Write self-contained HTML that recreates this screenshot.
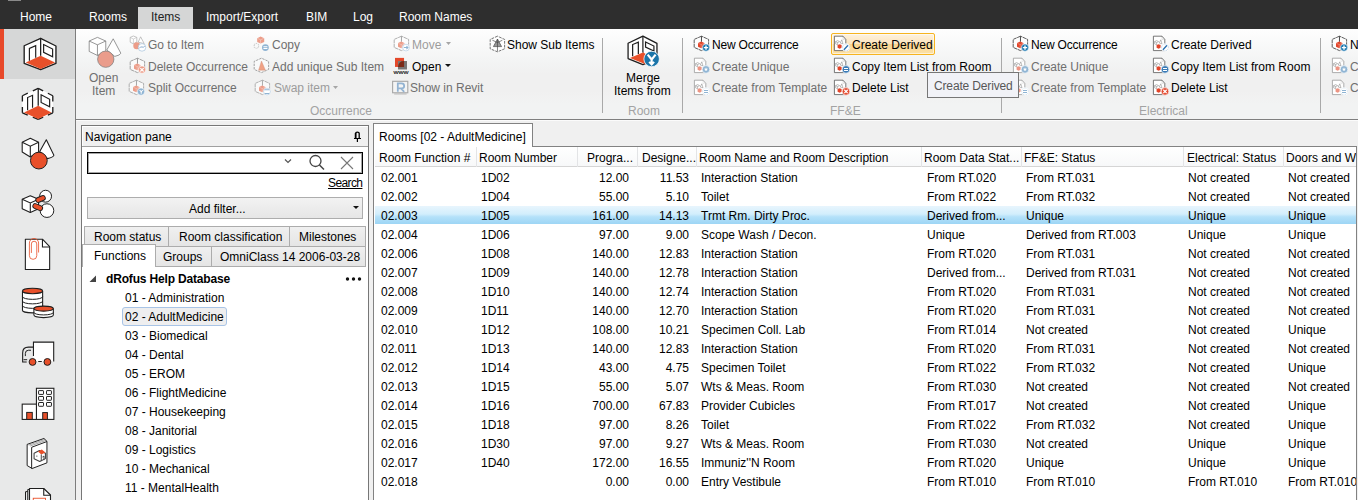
<!DOCTYPE html>
<html><head><meta charset="utf-8"><style>
*{margin:0;padding:0;box-sizing:border-box}
html,body{width:1358px;height:500px;overflow:hidden;background:#f0f0f0}
body{position:relative;font-family:"Liberation Sans",sans-serif;font-size:12px;color:#000}
.a{position:absolute}
.t{position:absolute;white-space:nowrap;line-height:16px;height:16px}
.mt{color:#fff;top:9px}
.dis{color:#6f6f6f}
.dis2{color:#9c9c9c}
.lbl{color:#a3a3a3}
.sep{width:1px;background:#a9a9a9}
.tab{position:absolute;border:1px solid #acacac;background:linear-gradient(#f0f0f0,#e5e5e5)}
</style></head><body>
<div class="a" style="left:0px;top:0px;width:1358px;height:29px;background:#2e2e2e"></div>
<div class="a" style="left:8px;top:0px;width:13px;height:1px;background:#8a8a8a"></div>
<div class="a" style="left:138px;top:7px;width:55px;height:22px;background:#d5d6d6"></div>
<div class="t " style="left:20px;top:9px;color:#fff">Home</div>
<div class="t " style="left:89px;top:9px;color:#fff">Rooms</div>
<div class="t " style="left:206px;top:9px;color:#fff">Import/Export</div>
<div class="t " style="left:306px;top:9px;color:#fff">BIM</div>
<div class="t " style="left:353px;top:9px;color:#fff">Log</div>
<div class="t " style="left:399px;top:9px;color:#fff">Room Names</div>
<div class="t " style="left:151px;top:9px;color:#222">Items</div>
<div class="a" style="left:0px;top:29px;width:75px;height:471px;background:#e8e9e9"></div>
<div class="a" style="left:4px;top:29px;width:71px;height:50px;background:#d6d7d7"></div>
<div class="a" style="left:0px;top:29px;width:4px;height:50px;background:#e8492a"></div>
<div class="a" style="left:75px;top:29px;width:1px;height:471px;background:#7d7d7d"></div>
<div class="a" style="left:76px;top:29px;width:1282px;height:90px;background:linear-gradient(#fefefe 0px,#f3f4f4 32px,#f0f0f0 45px,#f0f0f0 62px,#f2f3f3 75px,#f2f3f3 90px)"></div>
<div class="a" style="left:76px;top:119px;width:1282px;height:1px;background:#7f7f7f"></div>
<div class="a" style="left:76px;top:120px;width:1282px;height:1px;background:#fbfbfb"></div>
<div class="t dis" style="left:89px;top:70px;">Open</div>
<div class="t dis" style="left:92px;top:83px;">Item</div>
<div class="t dis" style="left:148px;top:37px;">Go to Item</div>
<div class="t dis" style="left:148px;top:59px;">Delete Occurrence</div>
<div class="t dis" style="left:148px;top:80px;">Split Occurrence</div>
<div class="t dis" style="left:272px;top:37px;">Copy</div>
<div class="t dis" style="left:272px;top:59px;">Add unique Sub Item</div>
<div class="t dis2" style="left:274px;top:80px;">Swap item</div>
<div class="t dis2" style="left:412px;top:37px;">Move</div>
<div class="t " style="left:412px;top:59px;">Open</div>
<div class="t dis" style="left:410px;top:80px;">Show in Revit</div>
<div class="t " style="left:507px;top:37px;">Show Sub Items</div>
<div class="t lbl" style="left:310px;top:103px;">Occurrence</div>
<svg class="a" style="left:333px;top:86px" width="5" height="3" viewBox="0 0 5 3"><path d="M0,0 L5,0 L2.5,3 Z" fill="#a6a6a6"/></svg>
<svg class="a" style="left:446px;top:42px" width="5" height="3" viewBox="0 0 5 3"><path d="M0,0 L5,0 L2.5,3 Z" fill="#a6a6a6"/></svg>
<svg class="a" style="left:445px;top:64px" width="6" height="3" viewBox="0 0 6 3"><path d="M0,0 L6,0 L3.0,3 Z" fill="#111"/></svg>
<div class="a" style="left:602px;top:38px;width:1px;height:75px;background:#a9a9a9"></div>
<div class="t " style="left:626px;top:70px;">Merge</div>
<div class="t " style="left:614px;top:83px;">Items from</div>
<div class="t lbl" style="left:628px;top:103px;">Room</div>
<div class="a" style="left:682px;top:38px;width:1px;height:75px;background:#a9a9a9"></div>
<div class="t " style="left:712px;top:37px;letter-spacing:-0.2px">New Occurrence</div>
<div class="t dis" style="left:712px;top:59px;">Create Unique</div>
<div class="t dis" style="left:712px;top:80px;">Create from Template</div>
<div class="a" style="left:831px;top:33px;width:104px;height:22px;border:1px solid #f6b420;border-radius:2px;box-shadow:inset 0 0 0 1px rgba(255,255,255,0.55);background:linear-gradient(#fdf2e0 0%,#fce4bd 48%,#f9d590 52%,#fbe1a8 100%)"></div>
<div class="t " style="left:852px;top:37px;">Create Derived</div>
<div class="t " style="left:852px;top:59px;">Copy Item List from Room</div>
<div class="t " style="left:852px;top:80px;">Delete List</div>
<div class="t lbl" style="left:830px;top:103px;">FF&amp;E</div>
<div class="a" style="left:1001px;top:38px;width:1px;height:75px;background:#a9a9a9"></div>
<div class="t " style="left:1031px;top:37px;letter-spacing:-0.2px">New Occurrence</div>
<div class="t dis" style="left:1031px;top:59px;">Create Unique</div>
<div class="t dis" style="left:1031px;top:80px;">Create from Template</div>
<div class="t " style="left:1171px;top:37px;">Create Derived</div>
<div class="t " style="left:1171px;top:59px;">Copy Item List from Room</div>
<div class="t " style="left:1171px;top:80px;">Delete List</div>
<div class="t lbl" style="left:1139px;top:103px;">Electrical</div>
<div class="a" style="left:1320px;top:38px;width:1px;height:75px;background:#a9a9a9"></div>
<div class="t " style="left:1350px;top:37px;letter-spacing:-0.2px">New Occurrence</div>
<div class="t dis" style="left:1350px;top:59px;">Create Unique</div>
<div class="t dis" style="left:1350px;top:80px;">Create from Template</div>
<svg class="a" style="left:15px;top:30px" width="45" height="45" viewBox="0 0 500 500"><path d="M285,92 L102,175 L102,370 L285,440 L455,370 L455,178 Z" fill="#fff" stroke="#1e1e1e" stroke-width="15" stroke-linejoin="round"/><path d="M120,362 L285,287 L445,362 L285,432 Z" fill="#e8502a"/><path d="M285,92 L285,287" stroke="#1e1e1e" stroke-width="14"/><path d="M160,342 L160,205 L230,175 L230,308" fill="none" stroke="#1e1e1e" stroke-width="13"/><path d="M318,162 L418,212 L418,298 L318,248 Z" fill="none" stroke="#1e1e1e" stroke-width="13"/></svg>
<svg class="a" style="left:15px;top:80px" width="45" height="45" viewBox="0 0 500 500"><path d="M258,92 L82,175 L82,365 L258,438 L420,365 L420,175 Z" fill="#fff"/><path d="M258,92 L198,120 M82,175 L142,147 M82,175 L82,240 M82,365 L82,300 M82,365 L142,390 M258,438 L198,413 M258,438 L313,413 M420,365 L365,390 M420,365 L420,300 M420,175 L420,240 M420,175 L365,147 M258,92 L313,120 " fill="none" stroke="#1e1e1e" stroke-width="15" stroke-linecap="butt"/><path d="M100,360 L258,287 L405,360 L258,432 Z" fill="#e8502a"/><path d="M258,92 L258,287" stroke="#1e1e1e" stroke-width="14"/><path d="M140,337 L140,195 L195,170 L195,307" fill="none" stroke="#1e1e1e" stroke-width="13"/><path d="M290,165 L385,215 L385,298 L290,250 Z" fill="none" stroke="#1e1e1e" stroke-width="13"/></svg>
<svg class="a" style="left:15px;top:130px" width="45" height="45" viewBox="0 0 500 500"><path d="M348,108 L275,240 L360,318 Q430,300 432,280 Z" fill="#fff" stroke="#1e1e1e" stroke-width="12" stroke-linejoin="round"/><path d="M80,135 L170,92 L262,135 L262,245 L170,300 L80,245 Z" fill="#fff" stroke="#1e1e1e" stroke-width="12" stroke-linejoin="round"/><path d="M80,135 L170,180 L262,135 M170,180 L170,300" fill="none" stroke="#1e1e1e" stroke-width="12"/><circle cx="265" cy="340" r="93" fill="#e8502a" stroke="#1e1e1e" stroke-width="11"/></svg>
<svg class="a" style="left:15px;top:180px" width="45" height="45" viewBox="0 0 500 500"><path d="M80,215 L170,175 L262,215 L262,320 L170,360 L80,320 Z" fill="#fff" stroke="#1e1e1e" stroke-width="12" stroke-linejoin="round"/><path d="M80,215 L170,255 L262,215 M170,255 L170,360" fill="none" stroke="#1e1e1e" stroke-width="12"/><circle cx="340" cy="180" r="66" fill="#fff" stroke="#1e1e1e" stroke-width="11"/><circle cx="355" cy="340" r="76" fill="#fff" stroke="#1e1e1e" stroke-width="11"/><path d="M258,222 L310,200" stroke="#1e1e1e" stroke-width="64" stroke-linecap="round"/><path d="M258,222 L310,200" stroke="#e8502a" stroke-width="44" stroke-linecap="round"/><path d="M225,290 L280,312" stroke="#1e1e1e" stroke-width="64" stroke-linecap="round"/><path d="M225,290 L280,312" stroke="#e8502a" stroke-width="44" stroke-linecap="round"/></svg>
<svg class="a" style="left:15px;top:230px" width="45" height="45" viewBox="0 0 500 500"><path d="M115,102 L305,102 L385,185 L385,438 L115,438 Z" fill="#fff" stroke="#1e1e1e" stroke-width="12" stroke-linejoin="round"/><path d="M305,102 L305,188 L385,188" fill="none" stroke="#1e1e1e" stroke-width="12"/><path d="M262,250 L262,145 A51,51 0 0 0 160,145 L160,285 A41,41 0 0 0 242,285 L242,155 A30,30 0 0 0 182,155 L182,255" fill="none" stroke="#e8502a" stroke-width="9"/></svg>
<svg class="a" style="left:15px;top:280px" width="45" height="45" viewBox="0 0 500 500"><path d="M83,122 L83,335 A112,30 0 0 0 307,335 L307,122" fill="#fff" stroke="#1e1e1e" stroke-width="12"/><path d="M83,185 A112,30 0 0 0 307,185" fill="none" stroke="#1e1e1e" stroke-width="11"/><path d="M83,235 A112,30 0 0 0 307,235" fill="none" stroke="#1e1e1e" stroke-width="11"/><path d="M83,285 A112,30 0 0 0 307,285" fill="none" stroke="#1e1e1e" stroke-width="11"/><ellipse cx="195" cy="122" rx="112" ry="30" fill="#e8502a" stroke="#1e1e1e" stroke-width="12"/><path d="M210,318 L210,390 A108,28 0 0 0 426,390 L426,318" fill="#fff" stroke="#1e1e1e" stroke-width="12"/><path d="M210,360 A108,28 0 0 0 426,360" fill="none" stroke="#1e1e1e" stroke-width="11"/><ellipse cx="318" cy="318" rx="108" ry="28" fill="#e8502a" stroke="#1e1e1e" stroke-width="12"/></svg>
<svg class="a" style="left:15px;top:330px" width="45" height="45" viewBox="0 0 500 500"><rect x="205" y="135" width="225" height="215" fill="#fff"/><path d="M205,290 L205,135 L430,135 L430,350" fill="none" stroke="#1e1e1e" stroke-width="12"/><path d="M200,190 L150,190 Q85,190 85,255 L85,355 L130,355" fill="none" stroke="#1e1e1e" stroke-width="12"/><path d="M178,225 L150,225 Q115,225 115,260 L115,290" fill="none" stroke="#1e1e1e" stroke-width="11"/><path d="M95,330 L135,330 M258,350 L298,350" fill="none" stroke="#1e1e1e" stroke-width="11"/><circle cx="195" cy="355" r="38" fill="#e8502a" stroke="#1e1e1e" stroke-width="11"/><circle cx="360" cy="355" r="38" fill="#e8502a" stroke="#1e1e1e" stroke-width="11"/></svg>
<svg class="a" style="left:15px;top:380px" width="45" height="45" viewBox="0 0 500 500"><rect x="238" y="92" width="194" height="346" fill="#fff" stroke="#1e1e1e" stroke-width="12"/><rect x="80" y="268" width="158" height="170" fill="#fff" stroke="#1e1e1e" stroke-width="12"/><rect x="262" y="118" width="55" height="42" rx="6" fill="#fff" stroke="#1e1e1e" stroke-width="11"/><rect x="262" y="183" width="55" height="42" rx="6" fill="#fff" stroke="#1e1e1e" stroke-width="11"/><rect x="262" y="250" width="55" height="42" rx="6" fill="#fff" stroke="#1e1e1e" stroke-width="11"/><rect x="350" y="118" width="55" height="42" rx="6" fill="#fff" stroke="#1e1e1e" stroke-width="11"/><rect x="350" y="183" width="55" height="42" rx="6" fill="#fff" stroke="#1e1e1e" stroke-width="11"/><rect x="350" y="250" width="55" height="42" rx="6" fill="#fff" stroke="#1e1e1e" stroke-width="11"/><rect x="130" y="360" width="62" height="78" fill="#e8502a" stroke="#1e1e1e" stroke-width="11"/><rect x="308" y="362" width="52" height="76" fill="#e8502a" stroke="#1e1e1e" stroke-width="11"/></svg>
<svg class="a" style="left:15px;top:430px" width="45" height="45" viewBox="0 0 500 500"><path d="M135,160 L322,94 L355,126 L355,365 L190,428 L135,395 Z" fill="#fff" stroke="#1e1e1e" stroke-width="11" stroke-linejoin="round"/><path d="M152,168 L332,105 M168,178 L344,116" fill="none" stroke="#555" stroke-width="6"/><path d="M185,192 L355,128 M185,192 L185,428" fill="none" stroke="#1e1e1e" stroke-width="11"/><path d="M212,258 L272,228 L338,258 L338,318 L275,350 L212,320 Z" fill="#fff" stroke="#444" stroke-width="12" stroke-linejoin="round"/><path d="M255,240 L298,218 L338,250 L292,272 Z" fill="#e8502a"/><path d="M292,272 L292,345 M305,300 L322,290 L322,335" fill="none" stroke="#444" stroke-width="11"/><circle cx="243" cy="290" r="7" fill="#444"/></svg>
<svg class="a" style="left:15px;top:475px" width="45" height="25" viewBox="0 0 900 500"><path d="M210,500 L210,335 L255,330 M255,500 L255,290 L290,288" fill="none" stroke="#1e1e1e" stroke-width="20"/><path d="M290,500 L290,270 L575,270 L710,400 L710,500" fill="#fff" stroke="#1e1e1e" stroke-width="22" stroke-linejoin="round"/><path d="M575,270 L575,405 L710,405" fill="none" stroke="#1e1e1e" stroke-width="22"/><rect x="365" y="465" width="245" height="80" fill="none" stroke="#e8502a" stroke-width="18"/></svg>

<svg class="a" style="left:84px;top:34px" width="40" height="40" viewBox="0 0 500 500"><path d="M365,60 L285,200 L385,280 Q455,265 460,240 Z" fill="#fff" stroke="#707070" stroke-width="9" stroke-linejoin="round"/><path d="M65,88 L168,42 L272,88 L272,218 L168,268 L65,218 Z" fill="#fff" stroke="#707070" stroke-width="9" stroke-linejoin="round"/><path d="M65,88 L168,135 L272,88 M168,135 L168,268" fill="none" stroke="#707070" stroke-width="9"/><circle cx="272" cy="315" r="102" fill="#ea9c8b" stroke="#7a7a7a" stroke-width="9"/></svg>
<svg class="a" style="left:127px;top:33px" width="20" height="20" viewBox="0 0 500 500"><path d="M80,110 L160,75 L245,110 L245,230 L160,270 L80,230 Z" fill="#fff" stroke="#a5a5a5" stroke-width="16" stroke-linejoin="round"/><path d="M80,110 L160,150 L245,110 M160,150 L160,270" fill="none" stroke="#b5b5b5" stroke-width="14"/><path d="M340,95 L280,230 L430,265 Z" fill="#fff" stroke="#a5a5a5" stroke-width="16" stroke-linejoin="round"/><circle cx="245" cy="320" r="88" fill="#ec9c88"/><circle cx="375" cy="360" r="95" fill="#fff" stroke="#8fb4d3" stroke-width="14"/><path d="M305,385 Q340,330 375,350 Q410,370 445,330" fill="none" stroke="#7ea4c8" stroke-width="22"/></svg>
<svg class="a" style="left:127px;top:55px" width="20" height="20" viewBox="0 0 500 500"><path d="M262,80 L80,160 L80,360 L262,440 L440,360 L440,160 Z" fill="#fff" fill-opacity="0.6" stroke="#8c8c8c" stroke-width="20" stroke-linejoin="round" stroke-dasharray="90 14"/><path d="M262,80 L262,220" stroke="#8c8c8c" stroke-width="22"/><path d="M175,250 L255,215 L335,250 L335,345 L255,380 L175,345 Z" fill="#ec9c88"/><path d="M180,255 L255,290 L330,255 M255,290 L255,375" stroke="#fff" stroke-opacity="0.5" stroke-width="14" fill="none"/><circle cx="375" cy="365" r="92" fill="#ec9c88" stroke="#fff" stroke-width="16"/><path d="M333,328 L417,412 M417,328 L333,412" stroke="#fff" stroke-width="30"/></svg>
<svg class="a" style="left:127px;top:77px" width="20" height="20" viewBox="0 0 500 500"><path d="M237,80 L55,160 L55,360 L237,440 L415,360 L415,160 Z" fill="#fff" fill-opacity="0.6" stroke="#9a9a9a" stroke-width="20" stroke-linejoin="round" stroke-dasharray="90 14"/><path d="M237,80 L237,220" stroke="#9a9a9a" stroke-width="22"/><path d="M150,250 L230,215 L310,250 L310,345 L230,380 L150,345 Z" fill="#ec9c88"/><path d="M155,255 L230,290 L305,255 M230,290 L230,375" stroke="#fff" stroke-opacity="0.5" stroke-width="14" fill="none"/><circle cx="350" cy="365" r="92" fill="#8fb4d3" stroke="#fff" stroke-width="16"/><path d="M315,325 L355,370 L395,325 M355,370 L355,420" stroke="#fff" stroke-width="26" fill="none"/></svg>
<svg class="a" style="left:251px;top:33px" width="20" height="20" viewBox="0 0 500 500"><path d="M155,130 L240,90 L330,130 L330,225 L240,265 L155,225 Z" fill="#ec9c88"/><path d="M165,135 L240,170 L320,135 M240,170 L240,255" stroke="#fff" stroke-opacity="0.6" stroke-width="14" fill="none"/><path d="M80,285 L130,260 L190,285 L190,360 L130,385 L80,360 Z" fill="none" stroke="#aaa" stroke-width="16" stroke-dasharray="30 20"/><circle cx="360" cy="365" r="85" fill="#8fb4d3"/><path d="M310,343 L410,343 M310,390 L410,390" stroke="#fff" stroke-width="26"/></svg>
<svg class="a" style="left:251px;top:55px" width="20" height="20" viewBox="0 0 500 500"><path d="M262,80 L80,160 L80,360 L262,440 L440,360 L440,160 Z" fill="#fff" fill-opacity="0.5" stroke="#8a8a8a" stroke-width="20" stroke-linejoin="round" stroke-dasharray="60 25"/><path d="M262,150 L190,380 L360,380 Z" fill="#f0a184" stroke="#c98a77" stroke-width="10" stroke-linejoin="round"/></svg>
<svg class="a" style="left:252px;top:77px" width="20" height="20" viewBox="0 0 500 500"><path d="M262,80 L80,160 L80,360 L262,440 L440,360 L440,160 Z" fill="#fff" fill-opacity="0.6" stroke="#a0a0a0" stroke-width="20" stroke-linejoin="round" stroke-dasharray="90 14"/><path d="M262,80 L262,220" stroke="#a0a0a0" stroke-width="22"/><path d="M175,250 L255,215 L335,250 L335,345 L255,380 L175,345 Z" fill="#ec9c88"/><path d="M180,255 L255,290 L330,255 M255,290 L255,375" stroke="#fff" stroke-opacity="0.5" stroke-width="14" fill="none"/><circle cx="375" cy="365" r="92" fill="#fff" stroke="#fff" stroke-width="16"/><circle cx="375" cy="365" r="85" fill="none" stroke="#8fb4d3" stroke-width="12"/><path d="M320,320 L430,320 M320,410 L430,410" stroke="#8fb4d3" stroke-width="26"/></svg>
<svg class="a" style="left:391px;top:33px" width="20" height="20" viewBox="0 0 500 500"><path d="M262,80 L80,160 L80,360 L262,440 L440,360 L440,160 Z" fill="#fff" fill-opacity="0.6" stroke="#9a9a9a" stroke-width="20" stroke-linejoin="round" stroke-dasharray="90 14"/><path d="M262,80 L262,220" stroke="#9a9a9a" stroke-width="22"/><path d="M175,250 L255,215 L335,250 L335,345 L255,380 L175,345 Z" fill="#ec9c88"/><path d="M180,255 L255,290 L330,255 M255,290 L255,375" stroke="#fff" stroke-opacity="0.5" stroke-width="14" fill="none"/><circle cx="375" cy="365" r="92" fill="#fff" stroke="#fff" stroke-width="16"/><circle cx="375" cy="365" r="85" fill="none" stroke="#8fb4d3" stroke-width="12"/><path d="M320,365 L420,365 M385,325 L425,365 L385,405" stroke="#8fb4d3" stroke-width="26" fill="none"/></svg>
<svg class="a" style="left:391px;top:49px" width="20" height="30" viewBox="0 0 250 375"><rect x="50" y="111" width="113" height="113" fill="#e4482a"/><rect x="87" y="150" width="113" height="106" fill="#7a7776"/><path d="M87,224 L163,224 L163,150 Q95,150 87,224 Z" fill="#7c2a17"/><text x="125" y="312" font-family="Liberation Sans" font-size="74" text-anchor="middle" fill="#222" stroke="#222" stroke-width="2" textLength="187" lengthAdjust="spacingAndGlyphs">www</text></svg>
<svg class="a" style="left:391px;top:77px" width="20" height="20" viewBox="0 0 250 250"><rect x="20" y="54" width="190" height="143" fill="#f4f4f4" stroke="#a8a8a8" stroke-width="14"/><path d="M85,185 L85,80 L130,80 Q165,80 165,112 Q165,142 130,142 L85,142 M125,142 L165,185" fill="none" stroke="#93b3d2" stroke-width="22"/><path d="M40,212 L195,212" stroke="#b5b5b5" stroke-width="12"/></svg>
<svg class="a" style="left:486px;top:33px" width="20" height="20" viewBox="0 0 500 500"><path d="M287,80 L105,160 L105,395 L287,470 L465,395 L465,160 Z" fill="#fff" stroke="#555" stroke-width="20" stroke-linejoin="round" stroke-dasharray="70 25"/><path d="M287,150 L185,340 L390,340 Z" fill="#999" stroke="#444" stroke-width="16" stroke-linejoin="round"/><path d="M287,150 L287,460 M160,180 L287,240 L410,180" fill="none" stroke="#444" stroke-width="16"/></svg>
<svg class="a" style="left:622px;top:32px" width="44" height="38" viewBox="0 0 579 500"><path d="M275,55 L80,148 L80,350 L275,430 L460,350 L460,150 Z" fill="#fff" stroke="#1e1e1e" stroke-width="17" stroke-linejoin="round"/><path d="M105,342 L282,268 L330,310 L310,425 Z" fill="#e8502a"/><path d="M275,55 L275,270" stroke="#1e1e1e" stroke-width="16"/><path d="M140,318 L140,165 L215,135 L215,288" fill="none" stroke="#1e1e1e" stroke-width="16"/><path d="M310,132 L420,185 L420,250 L310,198 Z" fill="none" stroke="#1e1e1e" stroke-width="16"/><circle cx="390" cy="355" r="102" fill="#1b75a9" stroke="#fff" stroke-width="10"/><path d="M338,298 L390,362 L442,298 M390,362 L390,425 M358,393 L390,428 L422,393" fill="none" stroke="#fff" stroke-width="28"/></svg>
<svg class="a" style="left:691px;top:33px" width="20" height="20" viewBox="0 0 500 500"><path d="M262,80 L80,160 L80,360 L262,440 L440,360 L440,160 Z" fill="#fff" fill-opacity="0.6" stroke="#333" stroke-width="20" stroke-linejoin="round" stroke-dasharray="90 14"/><path d="M262,80 L262,220" stroke="#333" stroke-width="22"/><path d="M175,250 L255,215 L335,250 L335,345 L255,380 L175,345 Z" fill="#e2452a"/><path d="M180,255 L255,290 L330,255 M255,290 L255,375" stroke="#fff" stroke-opacity="0.5" stroke-width="14" fill="none"/><circle cx="375" cy="365" r="92" fill="#1b78b1" stroke="#fff" stroke-width="16"/><path d="M375,310 L375,420 M320,365 L430,365" stroke="#fff" stroke-width="34"/></svg>
<svg class="a" style="left:691px;top:55px" width="20" height="20" viewBox="0 0 500 500"><path d="M85,80 L300,80 L370,160 L370,440 L85,440 Z" fill="#fff" stroke="#999" stroke-width="20" stroke-linejoin="round"/><path d="M300,80 L300,160 L370,160" fill="none" stroke="#999" stroke-width="12" stroke-opacity="0.35"/><path d="M115,215 L165,190 L215,215 L165,240 Z M115,215 L115,270 L165,295 L165,240 M270,170 L230,250 L300,270 Z" fill="none" stroke="#666" stroke-width="13" stroke-opacity="0.8"/><path d="M165,300 L215,280 L265,300 L265,370 L215,395 L165,370 Z" fill="#ec9483"/><circle cx="375" cy="360" r="95" fill="#8fb4d3" stroke="#fff" stroke-width="16"/><path d="M375,305 L389,341 L427,343 L398,367 L407,404 L375,384 L343,404 L352,367 L323,343 L361,341 Z" fill="#fff"/></svg>
<svg class="a" style="left:691px;top:77px" width="20" height="20" viewBox="0 0 500 500"><path d="M85,80 L300,80 L370,160 L370,440 L85,440 Z" fill="#fff" stroke="#999" stroke-width="20" stroke-linejoin="round"/><path d="M300,80 L300,160 L370,160" fill="none" stroke="#999" stroke-width="12" stroke-opacity="0.35"/><path d="M115,215 L165,190 L215,215 L165,240 Z M115,215 L115,270 L165,295 L165,240 M270,170 L230,250 L300,270 Z" fill="none" stroke="#666" stroke-width="13" stroke-opacity="0.8"/><path d="M165,300 L215,280 L265,300 L265,370 L215,395 L165,370 Z" fill="#ec9483"/><circle cx="375" cy="360" r="95" fill="#fff" stroke="#fff" stroke-width="16"/><circle cx="375" cy="360" r="85" fill="none" stroke="#8fb4d3" stroke-width="12" stroke-dasharray="20 20"/><path d="M325,338 L425,338 M325,385 L425,385" stroke="#8fb4d3" stroke-width="26"/></svg>
<svg class="a" style="left:831px;top:33px" width="20" height="20" viewBox="0 0 500 500"><path d="M85,80 L300,80 L370,160 L370,440 L85,440 Z" fill="#fff" stroke="#555" stroke-width="20" stroke-linejoin="round"/><path d="M300,80 L300,160 L370,160" fill="none" stroke="#555" stroke-width="12" stroke-opacity="0.35"/><path d="M115,215 L165,190 L215,215 L165,240 Z M115,215 L115,270 L165,295 L165,240 M270,170 L230,250 L300,270 Z" fill="none" stroke="#666" stroke-width="13" stroke-opacity="0.8"/><path d="M165,300 L215,280 L265,300 L265,370 L215,395 L165,370 Z" fill="#e2452a"/><circle cx="375" cy="360" r="95" fill="#fff" stroke="#fff" stroke-width="16"/><circle cx="375" cy="360" r="85" fill="none" stroke="#5a8fc0" stroke-width="12" stroke-dasharray="20 20"/><path d="M335,405 L415,320" stroke="#2a70b0" stroke-width="34" stroke-linecap="round"/></svg>
<svg class="a" style="left:831px;top:55px" width="20" height="20" viewBox="0 0 500 500"><path d="M85,80 L300,80 L370,160 L370,440 L85,440 Z" fill="#fff" stroke="#555" stroke-width="20" stroke-linejoin="round"/><path d="M300,80 L300,160 L370,160" fill="none" stroke="#555" stroke-width="12" stroke-opacity="0.35"/><path d="M115,215 L165,190 L215,215 L165,240 Z M115,215 L115,270 L165,295 L165,240 M270,170 L230,250 L300,270 Z" fill="none" stroke="#666" stroke-width="13" stroke-opacity="0.8"/><path d="M165,300 L215,280 L265,300 L265,370 L215,395 L165,370 Z" fill="#e2452a"/><circle cx="375" cy="360" r="95" fill="#3a7ab5" stroke="#fff" stroke-width="16"/><path d="M325,338 L425,338 M325,385 L425,385" stroke="#fff" stroke-width="26"/></svg>
<svg class="a" style="left:831px;top:77px" width="20" height="20" viewBox="0 0 500 500"><path d="M85,80 L300,80 L370,160 L370,440 L85,440 Z" fill="#fff" stroke="#555" stroke-width="20" stroke-linejoin="round"/><path d="M300,80 L300,160 L370,160" fill="none" stroke="#555" stroke-width="12" stroke-opacity="0.35"/><path d="M115,215 L165,190 L215,215 L165,240 Z M115,215 L115,270 L165,295 L165,240 M270,170 L230,250 L300,270 Z" fill="none" stroke="#666" stroke-width="13" stroke-opacity="0.8"/><path d="M165,300 L215,280 L265,300 L265,370 L215,395 L165,370 Z" fill="#e2452a"/><circle cx="375" cy="360" r="95" fill="#e34c32" stroke="#fff" stroke-width="16"/><path d="M333,318 L417,402 M417,318 L333,402" stroke="#fff" stroke-width="30"/></svg>
<svg class="a" style="left:1010px;top:33px" width="20" height="20" viewBox="0 0 500 500"><path d="M262,80 L80,160 L80,360 L262,440 L440,360 L440,160 Z" fill="#fff" fill-opacity="0.6" stroke="#333" stroke-width="20" stroke-linejoin="round" stroke-dasharray="90 14"/><path d="M262,80 L262,220" stroke="#333" stroke-width="22"/><path d="M175,250 L255,215 L335,250 L335,345 L255,380 L175,345 Z" fill="#e2452a"/><path d="M180,255 L255,290 L330,255 M255,290 L255,375" stroke="#fff" stroke-opacity="0.5" stroke-width="14" fill="none"/><circle cx="375" cy="365" r="92" fill="#1b78b1" stroke="#fff" stroke-width="16"/><path d="M375,310 L375,420 M320,365 L430,365" stroke="#fff" stroke-width="34"/></svg>
<svg class="a" style="left:1010px;top:55px" width="20" height="20" viewBox="0 0 500 500"><path d="M85,80 L300,80 L370,160 L370,440 L85,440 Z" fill="#fff" stroke="#999" stroke-width="20" stroke-linejoin="round"/><path d="M300,80 L300,160 L370,160" fill="none" stroke="#999" stroke-width="12" stroke-opacity="0.35"/><path d="M115,215 L165,190 L215,215 L165,240 Z M115,215 L115,270 L165,295 L165,240 M270,170 L230,250 L300,270 Z" fill="none" stroke="#666" stroke-width="13" stroke-opacity="0.8"/><path d="M165,300 L215,280 L265,300 L265,370 L215,395 L165,370 Z" fill="#ec9483"/><circle cx="375" cy="360" r="95" fill="#8fb4d3" stroke="#fff" stroke-width="16"/><path d="M375,305 L389,341 L427,343 L398,367 L407,404 L375,384 L343,404 L352,367 L323,343 L361,341 Z" fill="#fff"/></svg>
<svg class="a" style="left:1010px;top:77px" width="20" height="20" viewBox="0 0 500 500"><path d="M85,80 L300,80 L370,160 L370,440 L85,440 Z" fill="#fff" stroke="#999" stroke-width="20" stroke-linejoin="round"/><path d="M300,80 L300,160 L370,160" fill="none" stroke="#999" stroke-width="12" stroke-opacity="0.35"/><path d="M115,215 L165,190 L215,215 L165,240 Z M115,215 L115,270 L165,295 L165,240 M270,170 L230,250 L300,270 Z" fill="none" stroke="#666" stroke-width="13" stroke-opacity="0.8"/><path d="M165,300 L215,280 L265,300 L265,370 L215,395 L165,370 Z" fill="#ec9483"/><circle cx="375" cy="360" r="95" fill="#fff" stroke="#fff" stroke-width="16"/><circle cx="375" cy="360" r="85" fill="none" stroke="#8fb4d3" stroke-width="12" stroke-dasharray="20 20"/><path d="M325,338 L425,338 M325,385 L425,385" stroke="#8fb4d3" stroke-width="26"/></svg>
<svg class="a" style="left:1150px;top:33px" width="20" height="20" viewBox="0 0 500 500"><path d="M85,80 L300,80 L370,160 L370,440 L85,440 Z" fill="#fff" stroke="#555" stroke-width="20" stroke-linejoin="round"/><path d="M300,80 L300,160 L370,160" fill="none" stroke="#555" stroke-width="12" stroke-opacity="0.35"/><path d="M115,215 L165,190 L215,215 L165,240 Z M115,215 L115,270 L165,295 L165,240 M270,170 L230,250 L300,270 Z" fill="none" stroke="#666" stroke-width="13" stroke-opacity="0.8"/><path d="M165,300 L215,280 L265,300 L265,370 L215,395 L165,370 Z" fill="#e2452a"/><circle cx="375" cy="360" r="95" fill="#fff" stroke="#fff" stroke-width="16"/><circle cx="375" cy="360" r="85" fill="none" stroke="#5a8fc0" stroke-width="12" stroke-dasharray="20 20"/><path d="M335,405 L415,320" stroke="#2a70b0" stroke-width="34" stroke-linecap="round"/></svg>
<svg class="a" style="left:1150px;top:55px" width="20" height="20" viewBox="0 0 500 500"><path d="M85,80 L300,80 L370,160 L370,440 L85,440 Z" fill="#fff" stroke="#555" stroke-width="20" stroke-linejoin="round"/><path d="M300,80 L300,160 L370,160" fill="none" stroke="#555" stroke-width="12" stroke-opacity="0.35"/><path d="M115,215 L165,190 L215,215 L165,240 Z M115,215 L115,270 L165,295 L165,240 M270,170 L230,250 L300,270 Z" fill="none" stroke="#666" stroke-width="13" stroke-opacity="0.8"/><path d="M165,300 L215,280 L265,300 L265,370 L215,395 L165,370 Z" fill="#e2452a"/><circle cx="375" cy="360" r="95" fill="#3a7ab5" stroke="#fff" stroke-width="16"/><path d="M325,338 L425,338 M325,385 L425,385" stroke="#fff" stroke-width="26"/></svg>
<svg class="a" style="left:1150px;top:77px" width="20" height="20" viewBox="0 0 500 500"><path d="M85,80 L300,80 L370,160 L370,440 L85,440 Z" fill="#fff" stroke="#555" stroke-width="20" stroke-linejoin="round"/><path d="M300,80 L300,160 L370,160" fill="none" stroke="#555" stroke-width="12" stroke-opacity="0.35"/><path d="M115,215 L165,190 L215,215 L165,240 Z M115,215 L115,270 L165,295 L165,240 M270,170 L230,250 L300,270 Z" fill="none" stroke="#666" stroke-width="13" stroke-opacity="0.8"/><path d="M165,300 L215,280 L265,300 L265,370 L215,395 L165,370 Z" fill="#e2452a"/><circle cx="375" cy="360" r="95" fill="#e34c32" stroke="#fff" stroke-width="16"/><path d="M333,318 L417,402 M417,318 L333,402" stroke="#fff" stroke-width="30"/></svg>
<svg class="a" style="left:1329px;top:33px" width="20" height="20" viewBox="0 0 500 500"><path d="M262,80 L80,160 L80,360 L262,440 L440,360 L440,160 Z" fill="#fff" fill-opacity="0.6" stroke="#333" stroke-width="20" stroke-linejoin="round" stroke-dasharray="90 14"/><path d="M262,80 L262,220" stroke="#333" stroke-width="22"/><path d="M175,250 L255,215 L335,250 L335,345 L255,380 L175,345 Z" fill="#e2452a"/><path d="M180,255 L255,290 L330,255 M255,290 L255,375" stroke="#fff" stroke-opacity="0.5" stroke-width="14" fill="none"/><circle cx="375" cy="365" r="92" fill="#1b78b1" stroke="#fff" stroke-width="16"/><path d="M375,310 L375,420 M320,365 L430,365" stroke="#fff" stroke-width="34"/></svg>
<svg class="a" style="left:1329px;top:55px" width="20" height="20" viewBox="0 0 500 500"><path d="M85,80 L300,80 L370,160 L370,440 L85,440 Z" fill="#fff" stroke="#999" stroke-width="20" stroke-linejoin="round"/><path d="M300,80 L300,160 L370,160" fill="none" stroke="#999" stroke-width="12" stroke-opacity="0.35"/><path d="M115,215 L165,190 L215,215 L165,240 Z M115,215 L115,270 L165,295 L165,240 M270,170 L230,250 L300,270 Z" fill="none" stroke="#666" stroke-width="13" stroke-opacity="0.8"/><path d="M165,300 L215,280 L265,300 L265,370 L215,395 L165,370 Z" fill="#ec9483"/><circle cx="375" cy="360" r="95" fill="#8fb4d3" stroke="#fff" stroke-width="16"/><path d="M375,305 L389,341 L427,343 L398,367 L407,404 L375,384 L343,404 L352,367 L323,343 L361,341 Z" fill="#fff"/></svg>
<svg class="a" style="left:1329px;top:77px" width="20" height="20" viewBox="0 0 500 500"><path d="M85,80 L300,80 L370,160 L370,440 L85,440 Z" fill="#fff" stroke="#999" stroke-width="20" stroke-linejoin="round"/><path d="M300,80 L300,160 L370,160" fill="none" stroke="#999" stroke-width="12" stroke-opacity="0.35"/><path d="M115,215 L165,190 L215,215 L165,240 Z M115,215 L115,270 L165,295 L165,240 M270,170 L230,250 L300,270 Z" fill="none" stroke="#666" stroke-width="13" stroke-opacity="0.8"/><path d="M165,300 L215,280 L265,300 L265,370 L215,395 L165,370 Z" fill="#ec9483"/><circle cx="375" cy="360" r="95" fill="#fff" stroke="#fff" stroke-width="16"/><circle cx="375" cy="360" r="85" fill="none" stroke="#8fb4d3" stroke-width="12" stroke-dasharray="20 20"/><path d="M325,338 L425,338 M325,385 L425,385" stroke="#8fb4d3" stroke-width="26"/></svg>

<div class="a" style="left:927px;top:72px;width:92px;height:26px;border:1px solid #767676;background:#f1f2f7;z-index:5"></div>
<div class="t " style="left:934px;top:78px;color:#575757;z-index:6;letter-spacing:-0.15px">Create Derived</div>
<div class="a" style="left:81px;top:125px;width:288px;height:380px;border:1px solid #777;background:#fff"></div>
<div class="a" style="left:82px;top:126px;width:286px;height:20px;background:#f0f0f0;border-top:1px solid #fff;border-left:1px solid #fff"></div>
<div class="a" style="left:82px;top:146px;width:286px;height:1px;background:#a0a0a0"></div>
<div class="t " style="left:85px;top:129px;">Navigation pane</div>
<svg class="a" style="left:353px;top:131px" width="9" height="12" viewBox="0 0 9 12"><path d="M2.6,7.4 L2.6,2.6 Q2.6,1.2 4.3,1.2 Q6.2,1.2 6.2,2.6 L6.2,7.4" stroke="#000" stroke-width="1.3" fill="none"/><path d="M2.6,2 L2.6,7.4" stroke="#000" stroke-width="1.6"/><path d="M1,7.5 L8,7.5 M4.4,7.5 L4.4,11" stroke="#000" stroke-width="1.2"/></svg>
<div class="a" style="left:87px;top:152px;width:276px;height:22px;border:1px solid #000;box-shadow:inset 0 0 0 1px rgba(0,0,0,0.35);background:#fff"></div>
<svg class="a" style="left:284px;top:158px" width="8" height="6" viewBox="0 0 8 6"><path d="M1,1.5 L4,4.5 L7,1.5" stroke="#555" stroke-width="1.2" fill="none"/></svg>
<svg class="a" style="left:307px;top:153px" width="20" height="20" viewBox="0 0 20 20"><circle cx="8.5" cy="8" r="5.5" stroke="#444" stroke-width="1.3" fill="none"/><path d="M12.5,12 L17,16.5" stroke="#444" stroke-width="1.5"/></svg>
<svg class="a" style="left:340px;top:156px" width="14" height="14" viewBox="0 0 14 14"><path d="M1,1 L13,13 M13,1 L1,13" stroke="#777" stroke-width="1.1"/></svg>
<div class="t " style="left:328px;top:175px;text-decoration:underline;letter-spacing:-0.6px">Search</div>
<div class="a" style="left:87px;top:197px;width:276px;height:22px;border:1px solid #adadad;background:linear-gradient(#f2f2f2,#e6e6e6)"></div>
<div class="t " style="left:189px;top:201px;">Add filter...</div>
<svg class="a" style="left:353px;top:206px" width="6" height="3" viewBox="0 0 6 3"><path d="M0,0 L6,0 L3.0,3 Z" fill="#111"/></svg>
<div class="tab" style="left:84px;top:226px;width:85px;height:21px"></div>
<div class="tab" style="left:168px;top:226px;width:122px;height:21px"></div>
<div class="tab" style="left:289px;top:226px;width:77px;height:21px"></div>
<div class="t " style="left:94px;top:229px;">Room status</div>
<div class="t " style="left:179px;top:229px;">Room classification</div>
<div class="t " style="left:299px;top:229px;">Milestones</div>
<div class="tab" style="left:155px;top:246px;width:57px;height:21px"></div>
<div class="tab" style="left:211px;top:246px;width:155px;height:21px"></div>
<div class="a" style="left:82px;top:244px;width:74px;height:23px;border:1px solid #acacac;border-bottom:none;background:#fff"></div>
<div class="t " style="left:94px;top:248px;">Functions</div>
<div class="t " style="left:163px;top:249px;">Groups</div>
<div class="t " style="left:220px;top:249px;">OmniClass 14 2006-03-28</div>
<svg class="a" style="left:89px;top:275px" width="8" height="8" viewBox="0 0 8 8"><path d="M7,0.5 L7,7 L0.5,7 Z" fill="#444"/></svg>
<div class="t " style="left:106px;top:271px;font-weight:bold;letter-spacing:-0.17px">dRofus Help Database</div>
<svg class="a" style="left:345px;top:276px" width="17" height="6" viewBox="0 0 17 6"><circle cx="2.5" cy="3" r="1.7" fill="#111"/><circle cx="8.5" cy="3" r="1.7" fill="#111"/><circle cx="14.5" cy="3" r="1.7" fill="#111"/></svg>
<div class="a" style="left:122px;top:307px;width:105px;height:19px;border:1px solid #a8c4e6;border-radius:3px;background:#eeeeef"></div>
<div class="t " style="left:125px;top:290px;">01 - Administration</div>
<div class="t " style="left:125px;top:309px;">02 - AdultMedicine</div>
<div class="t " style="left:125px;top:328px;">03 - Biomedical</div>
<div class="t " style="left:125px;top:347px;">04 - Dental</div>
<div class="t " style="left:125px;top:366px;">05 - EROM</div>
<div class="t " style="left:125px;top:385px;">06 - FlightMedicine</div>
<div class="t " style="left:125px;top:404px;">07 - Housekeeping</div>
<div class="t " style="left:125px;top:423px;">08 - Janitorial</div>
<div class="t " style="left:125px;top:442px;">09 - Logistics</div>
<div class="t " style="left:125px;top:461px;">10 - Mechanical</div>
<div class="t " style="left:125px;top:480px;">11 - MentalHealth</div>
<div class="t " style="left:125px;top:499px;">12 - Nursing</div>
<div class="a" style="left:373px;top:146px;width:984px;height:360px;border:1px solid #828282;background:#fff"></div>
<div class="a" style="left:373px;top:123px;width:160px;height:25px;border:1px solid #828282;border-bottom:none;background:#fff"></div>
<div class="t " style="left:379px;top:129px;">Rooms [02 - AdultMedicine]</div>
<div class="a" style="left:533px;top:146px;width:823px;height:1px;background:#828282"></div>
<div class="a" style="left:375px;top:147px;width:981px;height:353px;overflow:hidden">
<div class="a" style="left:0px;top:0px;width:981px;height:20px;background:linear-gradient(#fff,#f7f8f9);border-bottom:1px solid #d5d5d5"></div>
<div class="a" style="left:101px;top:0px;width:1px;height:20px;background:#e3e4e6"></div>
<div class="a" style="left:202px;top:0px;width:1px;height:20px;background:#e3e4e6"></div>
<div class="a" style="left:262px;top:0px;width:1px;height:20px;background:#e3e4e6"></div>
<div class="a" style="left:321px;top:0px;width:1px;height:20px;background:#e3e4e6"></div>
<div class="a" style="left:546px;top:0px;width:1px;height:20px;background:#e3e4e6"></div>
<div class="a" style="left:646px;top:0px;width:1px;height:20px;background:#e3e4e6"></div>
<div class="a" style="left:808px;top:0px;width:1px;height:20px;background:#e3e4e6"></div>
<div class="a" style="left:908px;top:0px;width:1px;height:20px;background:#e3e4e6"></div>
<div class="t" style="left:4px;top:3px;">Room Function #</div>
<div class="t" style="left:104px;top:3px;">Room Number</div>
<div class="t" style="left:198px;top:3px;width:60px;text-align:right">Progra...</div>
<div class="t" style="left:267px;top:3px;">Designe...</div>
<div class="t" style="left:324px;top:3px;">Room Name and Room Description</div>
<div class="t" style="left:549px;top:3px;">Room Data Stat...</div>
<div class="t" style="left:649px;top:3px;">FF&amp;E: Status</div>
<div class="t" style="left:812px;top:3px;">Electrical: Status</div>
<div class="t" style="left:911px;top:3px;">Doors and Windows: Status</div>
<div class="t" style="left:6px;top:23px;">02.001</div>
<div class="t" style="left:106px;top:23px;">1D02</div>
<div class="t" style="left:194px;top:23px;width:60px;text-align:right">12.00</div>
<div class="t" style="left:254px;top:23px;width:60px;text-align:right">11.53</div>
<div class="t" style="left:326px;top:23px;">Interaction Station</div>
<div class="t" style="left:552px;top:23px;">From RT.020</div>
<div class="t" style="left:651px;top:23px;">From RT.031</div>
<div class="t" style="left:813px;top:23px;">Not created</div>
<div class="t" style="left:913px;top:23px;">Not created</div>
<div class="t" style="left:6px;top:42px;">02.002</div>
<div class="t" style="left:106px;top:42px;">1D04</div>
<div class="t" style="left:194px;top:42px;width:60px;text-align:right">55.00</div>
<div class="t" style="left:254px;top:42px;width:60px;text-align:right">5.10</div>
<div class="t" style="left:326px;top:42px;">Toilet</div>
<div class="t" style="left:552px;top:42px;">From RT.022</div>
<div class="t" style="left:651px;top:42px;">From RT.032</div>
<div class="t" style="left:813px;top:42px;">Not created</div>
<div class="t" style="left:913px;top:42px;">Not created</div>
<div class="a" style="left:0px;top:59px;width:981px;height:18px;background:linear-gradient(#e8f5fd 0%,#d2eefc 45%,#b4e1f9 60%,#9dd5f5 100%)"></div>
<div class="t" style="left:6px;top:61px;">02.003</div>
<div class="t" style="left:106px;top:61px;">1D05</div>
<div class="t" style="left:194px;top:61px;width:60px;text-align:right">161.00</div>
<div class="t" style="left:254px;top:61px;width:60px;text-align:right">14.13</div>
<div class="t" style="left:326px;top:61px;">Trmt Rm. Dirty Proc.</div>
<div class="t" style="left:552px;top:61px;">Derived from...</div>
<div class="t" style="left:651px;top:61px;">Unique</div>
<div class="t" style="left:813px;top:61px;">Unique</div>
<div class="t" style="left:913px;top:61px;">Unique</div>
<div class="t" style="left:6px;top:80px;">02.004</div>
<div class="t" style="left:106px;top:80px;">1D06</div>
<div class="t" style="left:194px;top:80px;width:60px;text-align:right">97.00</div>
<div class="t" style="left:254px;top:80px;width:60px;text-align:right">9.00</div>
<div class="t" style="left:326px;top:80px;">Scope Wash / Decon.</div>
<div class="t" style="left:552px;top:80px;">Unique</div>
<div class="t" style="left:651px;top:80px;">Derived from RT.003</div>
<div class="t" style="left:813px;top:80px;">Unique</div>
<div class="t" style="left:913px;top:80px;">Unique</div>
<div class="t" style="left:6px;top:99px;">02.006</div>
<div class="t" style="left:106px;top:99px;">1D08</div>
<div class="t" style="left:194px;top:99px;width:60px;text-align:right">140.00</div>
<div class="t" style="left:254px;top:99px;width:60px;text-align:right">12.83</div>
<div class="t" style="left:326px;top:99px;">Interaction Station</div>
<div class="t" style="left:552px;top:99px;">From RT.020</div>
<div class="t" style="left:651px;top:99px;">From RT.031</div>
<div class="t" style="left:813px;top:99px;">Not created</div>
<div class="t" style="left:913px;top:99px;">Not created</div>
<div class="t" style="left:6px;top:118px;">02.007</div>
<div class="t" style="left:106px;top:118px;">1D09</div>
<div class="t" style="left:194px;top:118px;width:60px;text-align:right">140.00</div>
<div class="t" style="left:254px;top:118px;width:60px;text-align:right">12.78</div>
<div class="t" style="left:326px;top:118px;">Interaction Station</div>
<div class="t" style="left:552px;top:118px;">Derived from...</div>
<div class="t" style="left:651px;top:118px;">Derived from RT.031</div>
<div class="t" style="left:813px;top:118px;">Not created</div>
<div class="t" style="left:913px;top:118px;">Not created</div>
<div class="t" style="left:6px;top:137px;">02.008</div>
<div class="t" style="left:106px;top:137px;">1D10</div>
<div class="t" style="left:194px;top:137px;width:60px;text-align:right">140.00</div>
<div class="t" style="left:254px;top:137px;width:60px;text-align:right">12.74</div>
<div class="t" style="left:326px;top:137px;">Interaction Station</div>
<div class="t" style="left:552px;top:137px;">From RT.020</div>
<div class="t" style="left:651px;top:137px;">From RT.031</div>
<div class="t" style="left:813px;top:137px;">Not created</div>
<div class="t" style="left:913px;top:137px;">Not created</div>
<div class="t" style="left:6px;top:156px;">02.009</div>
<div class="t" style="left:106px;top:156px;">1D11</div>
<div class="t" style="left:194px;top:156px;width:60px;text-align:right">140.00</div>
<div class="t" style="left:254px;top:156px;width:60px;text-align:right">12.70</div>
<div class="t" style="left:326px;top:156px;">Interaction Station</div>
<div class="t" style="left:552px;top:156px;">From RT.020</div>
<div class="t" style="left:651px;top:156px;">From RT.031</div>
<div class="t" style="left:813px;top:156px;">Not created</div>
<div class="t" style="left:913px;top:156px;">Not created</div>
<div class="t" style="left:6px;top:175px;">02.010</div>
<div class="t" style="left:106px;top:175px;">1D12</div>
<div class="t" style="left:194px;top:175px;width:60px;text-align:right">108.00</div>
<div class="t" style="left:254px;top:175px;width:60px;text-align:right">10.21</div>
<div class="t" style="left:326px;top:175px;">Specimen Coll. Lab</div>
<div class="t" style="left:552px;top:175px;">From RT.014</div>
<div class="t" style="left:651px;top:175px;">Not created</div>
<div class="t" style="left:813px;top:175px;">Not created</div>
<div class="t" style="left:913px;top:175px;">Unique</div>
<div class="t" style="left:6px;top:194px;">02.011</div>
<div class="t" style="left:106px;top:194px;">1D13</div>
<div class="t" style="left:194px;top:194px;width:60px;text-align:right">140.00</div>
<div class="t" style="left:254px;top:194px;width:60px;text-align:right">12.83</div>
<div class="t" style="left:326px;top:194px;">Interaction Station</div>
<div class="t" style="left:552px;top:194px;">From RT.020</div>
<div class="t" style="left:651px;top:194px;">From RT.031</div>
<div class="t" style="left:813px;top:194px;">Not created</div>
<div class="t" style="left:913px;top:194px;">Not created</div>
<div class="t" style="left:6px;top:213px;">02.012</div>
<div class="t" style="left:106px;top:213px;">1D14</div>
<div class="t" style="left:194px;top:213px;width:60px;text-align:right">43.00</div>
<div class="t" style="left:254px;top:213px;width:60px;text-align:right">4.75</div>
<div class="t" style="left:326px;top:213px;">Specimen Toilet</div>
<div class="t" style="left:552px;top:213px;">From RT.022</div>
<div class="t" style="left:651px;top:213px;">From RT.032</div>
<div class="t" style="left:813px;top:213px;">Not created</div>
<div class="t" style="left:913px;top:213px;">Unique</div>
<div class="t" style="left:6px;top:232px;">02.013</div>
<div class="t" style="left:106px;top:232px;">1D15</div>
<div class="t" style="left:194px;top:232px;width:60px;text-align:right">55.00</div>
<div class="t" style="left:254px;top:232px;width:60px;text-align:right">5.07</div>
<div class="t" style="left:326px;top:232px;">Wts &amp; Meas. Room</div>
<div class="t" style="left:552px;top:232px;">From RT.030</div>
<div class="t" style="left:651px;top:232px;">Not created</div>
<div class="t" style="left:813px;top:232px;">Not created</div>
<div class="t" style="left:913px;top:232px;">Not created</div>
<div class="t" style="left:6px;top:251px;">02.014</div>
<div class="t" style="left:106px;top:251px;">1D16</div>
<div class="t" style="left:194px;top:251px;width:60px;text-align:right">700.00</div>
<div class="t" style="left:254px;top:251px;width:60px;text-align:right">67.83</div>
<div class="t" style="left:326px;top:251px;">Provider Cubicles</div>
<div class="t" style="left:552px;top:251px;">From RT.017</div>
<div class="t" style="left:651px;top:251px;">Not created</div>
<div class="t" style="left:813px;top:251px;">Not created</div>
<div class="t" style="left:913px;top:251px;">Unique</div>
<div class="t" style="left:6px;top:270px;">02.015</div>
<div class="t" style="left:106px;top:270px;">1D18</div>
<div class="t" style="left:194px;top:270px;width:60px;text-align:right">97.00</div>
<div class="t" style="left:254px;top:270px;width:60px;text-align:right">8.26</div>
<div class="t" style="left:326px;top:270px;">Toilet</div>
<div class="t" style="left:552px;top:270px;">From RT.022</div>
<div class="t" style="left:651px;top:270px;">From RT.032</div>
<div class="t" style="left:813px;top:270px;">Not created</div>
<div class="t" style="left:913px;top:270px;">Unique</div>
<div class="t" style="left:6px;top:289px;">02.016</div>
<div class="t" style="left:106px;top:289px;">1D30</div>
<div class="t" style="left:194px;top:289px;width:60px;text-align:right">97.00</div>
<div class="t" style="left:254px;top:289px;width:60px;text-align:right">9.27</div>
<div class="t" style="left:326px;top:289px;">Wts &amp; Meas. Room</div>
<div class="t" style="left:552px;top:289px;">From RT.030</div>
<div class="t" style="left:651px;top:289px;">Not created</div>
<div class="t" style="left:813px;top:289px;">Unique</div>
<div class="t" style="left:913px;top:289px;">Unique</div>
<div class="t" style="left:6px;top:308px;">02.017</div>
<div class="t" style="left:106px;top:308px;">1D40</div>
<div class="t" style="left:194px;top:308px;width:60px;text-align:right">172.00</div>
<div class="t" style="left:254px;top:308px;width:60px;text-align:right">16.55</div>
<div class="t" style="left:326px;top:308px;">Immuniz''N Room</div>
<div class="t" style="left:552px;top:308px;">From RT.020</div>
<div class="t" style="left:651px;top:308px;">Unique</div>
<div class="t" style="left:813px;top:308px;">Unique</div>
<div class="t" style="left:913px;top:308px;">Unique</div>
<div class="t" style="left:6px;top:327px;">02.018</div>
<div class="t" style="left:106px;top:327px;"></div>
<div class="t" style="left:194px;top:327px;width:60px;text-align:right">0.00</div>
<div class="t" style="left:254px;top:327px;width:60px;text-align:right">0.00</div>
<div class="t" style="left:326px;top:327px;">Entry Vestibule</div>
<div class="t" style="left:552px;top:327px;">From RT.010</div>
<div class="t" style="left:651px;top:327px;">From RT.010</div>
<div class="t" style="left:813px;top:327px;">From RT.010</div>
<div class="t" style="left:913px;top:327px;">From RT.010</div>
</div>
</body></html>
